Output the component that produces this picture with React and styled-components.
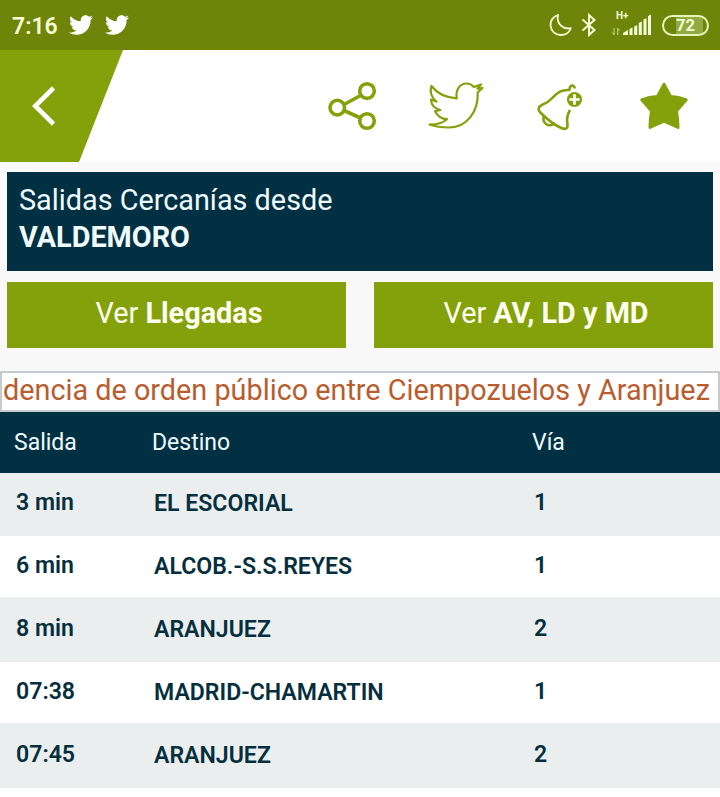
import styled, { createGlobalStyle } from "styled-components";
import { FaTwitter } from "react-icons/fa";

const departures = [
    { time: "3 min", destination: "EL ESCORIAL", track: 1 },
    { time: "6 min", destination: "ALCOB.-S.S.REYES", track: 1 },
    { time: "8 min", destination: "ARANJUEZ", track: 2 },
    { time: "07:38", destination: "MADRID-CHAMARTIN", track: 1 },
    { time: "07:45", destination: "ARANJUEZ", track: 2 },
];

const MoonIcon = () => (
    <svg width="24" height="24" viewBox="0 0 24 24" fill="none" stroke="currentColor" strokeWidth="1.8" strokeLinejoin="round">
        <path d="M9 2C3.500 4 1.300 8 1.500 12.500 2 18 6.500 22 11.500 22c4.800 0 8.800-2.700 10.300-6.800C14 16.500 7 10.500 9 2z" />
    </svg>
)

const BluetoothIcon = () => (
    <svg width="16" height="24" viewBox="0 0 16 24" fill="none" stroke="currentColor" strokeWidth="2">
        <path d="M1.500 6.500 13.500 17 8 22V2l5.500 5L1.500 17.500" />
    </svg>
)

const SignalIcon = () => (
    <svg width="41" height="26" viewBox="0 0 41 26" fill="currentColor">
        <g opacity="0.5">
            <path d="M2.500 16h1.300v7H2.500L0.500 20.500h2zM6 23h1.300v-4.500h2L7 16H6z" />
        </g>
        <path d="M12 23v-2l5-3v5zM18.500 23v-6l3-1.500V23zM23.200 23v-8.500l3-1.500v10zM27.800 23V11l3-1.500V23zM32.500 23V7.500l3-1.300V23zM37 23V4l3-1.500V23z" />
    </svg>
)

const BackIcon = () => (
    <svg width="24" height="42" viewBox="0 0 24 42" fill="none" stroke="#fff" strokeWidth="4.600">
        <path d="M21.500 3 3.200 21l18.300 18" />
    </svg>
)

const ShareIcon = () => (
    <svg width="60" height="60" viewBox="0 0 60 60" fill="none" stroke="#84a10b" strokeWidth="3.600">
        <circle cx="17.300" cy="31.600" r="7.300" />
        <circle cx="47" cy="15" r="7.300" />
        <circle cx="47" cy="45" r="7.300" />
        <path d="m24 28.500 16.500-9M24 34.500 40.500 42" />
    </svg>
)

const BirdIcon = () => (
    <svg width="70" height="60" viewBox="0 0 70 60" fill="none" stroke="#84a10b" strokeWidth="2.200" strokeLinejoin="round">
        <path d="M11.500 10C17 17.500 26 21.500 36.700 22.300 35.500 14 39.500 7.500 46.500 7.500c3 0 5.500 1.300 7.500 3.500l7-2.500-3.500 4.200 5-.7-4.800 4.500C58.500 35 47.500 51.500 29 51.500c-7 0-13.500-.8-19.500-3 7 0 13.500-1.500 17.500-5.300-5.500-.2-9.500-3.200-12-8l5.300-1.200C14.500 32.500 11.200 28.500 11 23.500l5.500 2C11 21 9.500 15.500 11.500 10z" />
    </svg>
)

const BellIcon = () => (
    <svg width="60" height="60" viewBox="0 0 60 60" fill="none" stroke="#84a10b" strokeWidth="2.600" strokeLinejoin="round">
        <path d="M44.800 12.500c-.5-4.500-5-4-5.500 1.500-8-.5-11.500 2.500-16.500 7.500-4 4.500-6 5.500-11 7.500-4 2-4 5-1.500 7.500 5 5 12 11.500 21 15.500 5 2 7 .5 6-5-1-5 .5-9 2.700-13" />
        <path d="M14 39.500c-2.500 7 4.500 13 11 7.500" />
        <circle cx="44.500" cy="23.500" r="7.600" fill="#84a10b" stroke="none" />
        <path d="M44.500 18.300v10.400M39.300 23.500h10.400" stroke="#fff" />
    </svg>
)

const StarIcon = () => (
    <svg width="60" height="60" viewBox="0 0 60 60" fill="#84a10b" stroke="#84a10b" strokeWidth="3" strokeLinejoin="round">
        <path d="M34 8.200 40.500 20.500Q49 20.700 56.300 23.800L46.500 35Q48 43 48 51.500L34 45.200 20 51.500q0-8.500 1.500-16.500L11.700 23.800q7.300-3.100 15.800-3.300z" />
    </svg>
)

const App = () => {
    return (
    <Page>
        <GlobalStyle />
        <StatusBar>
            <Clock>7:16</Clock>
            <Tweets><FaTwitter /><FaTwitter /></Tweets>
            <StatusIcons>
                <MoonIcon />
                <BluetoothIcon />
                <Signal><Network>H+</Network><SignalIcon /></Signal>
                <Battery>72</Battery>
            </StatusIcons>
        </StatusBar>
        <Toolbar>
            <Back><BackIcon /></Back>
            <Actions>
                <ShareIcon />
                <BirdIcon />
                <BellIcon />
                <StarIcon />
            </Actions>
        </Toolbar>
        <Station>
            <Line>Salidas Cercanías desde</Line>
            <Line $bold>VALDEMORO</Line>
        </Station>
        <Buttons>
            <Button>Ver <b>Llegadas</b></Button>
            <Button>Ver <b>AV, LD y MD</b></Button>
        </Buttons>
        <Notice>dencia de orden público entre Ciempozuelos y Aranjuez</Notice>
        <Header>
            <span>Salida</span>
            <span>Destino</span>
            <span>Vía</span>
        </Header>
        <Rows>
            {departures.map((item) => (
                <Row key={item.time}>
                    <Cell>{item.time}</Cell>
                    <Cell $low>{item.destination}</Cell>
                    <Cell>{item.track}</Cell>
                </Row>
            ))}
        </Rows>
    </Page>
    )
}

export default App;

const GlobalStyle = createGlobalStyle`
body {
margin: 0;
background: #fff;
font-family: Roboto, sans-serif;
}

* {
box-sizing: border-box;
}

svg {
display: block;
flex: none;
}
`

const Page = styled.div`
display: flex;
flex-direction: column;
width: 720px;
height: 797px;
overflow: hidden;
background: #f9f9f9;
`

const StatusBar = styled.div`
display: flex;
align-items: center;
height: 50px;
padding: 0 11px 0 12px;
background: #6e8509;
color: #f5ffd5;
`

const Clock = styled.span`
width: 57px;
padding-top: 2px;
font-size: 23px;
font-weight: 600;
`

const Tweets = styled.div`
display: flex;
gap: 12px;
color: #fff;
font-size: 24px;
`

const StatusIcons = styled.div`
display: flex;
align-items: center;
gap: 8px;
margin-left: auto;
`

const Signal = styled.div`
position: relative;
margin: 0 2px 0 6px;
`

const Network = styled.span`
position: absolute;
top: -2px;
left: 5px;
font-size: 10px;
font-weight: 700;
`

const Battery = styled.div`
width: 47px;
height: 21px;
border: 2px solid #e8f5b8;
border-radius: 11px;
background: linear-gradient(90deg, transparent 12px, #92aa43 12px, #92aa43 39px, transparent 39px);
font-size: 16.500px;
font-weight: 700;
line-height: 18px;
text-align: center;
`

const Toolbar = styled.div`
display: flex;
height: 112px;
background: #fff;
`

const Back = styled.div`
display: flex;
align-items: center;
width: 123px;
padding-left: 32px;
background: #84a10b;
clip-path: polygon(0 0, 100% 0, 79px 100%, 0 100%);
`

const Actions = styled.div`
display: flex;
align-items: center;
gap: 40px;
margin-left: 197px;
`

const Station = styled.div`
height: 99px;
margin: 10px 7px 11px;
padding: 10px 12px;
background: #003042;
color: #f0fbff;
`

const Line = styled.div`
font-size: 28.800px;
font-weight: ${(props) => (props.$bold ? 700 : 400)};
line-height: 37px;
`

const Buttons = styled.div`
display: grid;
grid-template-columns: 339px 339px;
justify-content: space-between;
margin: 0 7px 23px;
`

const Button = styled.button`
height: 66px;
padding: 0 0 4px 5px;
border: 0;
background: #84a10b;
color: #fffff0;
font-family: inherit;
font-size: 28.800px;
`

const Notice = styled.div`
height: 41px;
padding-left: 1px;
border: 2px solid #c5cacc;
background: #fff;
color: #b85d2f;
font-size: 28.800px;
line-height: 35px;
white-space: nowrap;
`

const Header = styled.div`
display: grid;
grid-template-columns: 138px 380px auto;
height: 61px;
padding-left: 14px;
background: #003042;
color: #f0fbff;
font-size: 23px;
line-height: 61px;
`

const Rows = styled.div`
flex: 1;
background: #fff;
`

const Row = styled.div`
display: grid;
grid-template-columns: 138px 380px auto;
height: 63px;
padding-left: 16px;
border-bottom: 2px solid #eaeeef;
color: #062f3e;

&:nth-child(odd) {
background: #eaeeef;
}
`

const Cell = styled.span`
padding-top: ${(props) => (props.$low ? 1 : 0)}px;
font-size: 23.100px;
font-weight: 600;
line-height: 59px;
`
